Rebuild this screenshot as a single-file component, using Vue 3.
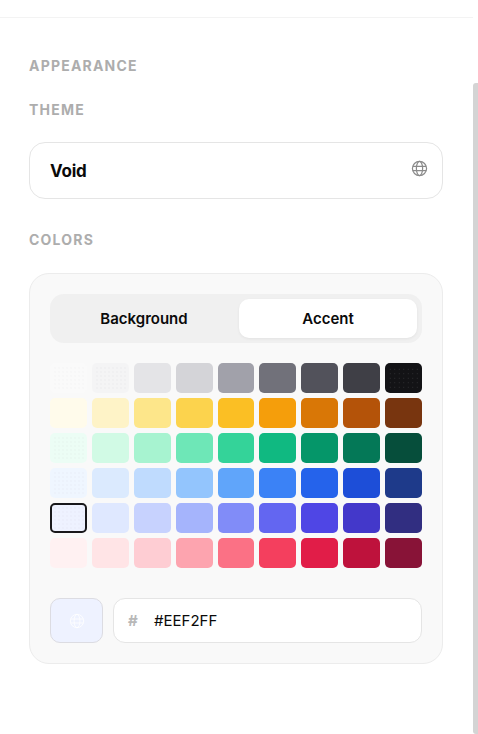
<script setup>
const palette = [
  ['#fafafa', '#f4f4f5', '#e4e4e7', '#d4d4d8', '#a1a1aa', '#71717a', '#52525b', '#3f3f46', '#131316'],
  ['#fffbeb', '#fef3c7', '#fde68a', '#fcd34d', '#fbbf24', '#f59e0b', '#d97706', '#b45309', '#78350f'],
  ['#ecfdf5', '#d1fae5', '#a7f3d0', '#6ee7b7', '#34d399', '#10b981', '#059669', '#047857', '#064e3b'],
  ['#eff6ff', '#dbeafe', '#bfdbfe', '#93c5fd', '#60a5fa', '#3b82f6', '#2563eb', '#1d4ed8', '#1e3a8a'],
  ['#eef2ff', '#dfe8ff', '#c7d2fe', '#a5b4fc', '#818cf8', '#6366f1', '#4f46e5', '#4338ca', '#312e81'],
  ['#fff1f2', '#ffe4e6', '#fecdd3', '#fda4af', '#fb7185', '#f43f5e', '#e11d48', '#be123c', '#881337'],
]
const swatches = palette.flat()
const selected = '#eef2ff'
const dotted = ['#f4f4f5', '#ecfdf5', '#eff6ff', '#eef2ff']
</script>

<template>
  <div class="page">
    <main class="panel">
      <div class="topbar"></div>
      <section class="content">
        <h2 class="label first">APPEARANCE</h2>
        <h3 class="label theme-label">THEME</h3>
        <div class="select">
          <span class="select-name">Void</span>
          <svg class="globe" viewBox="0 0 24 24" fill="none" stroke="currentColor" stroke-width="1.7">
            <circle cx="12" cy="12" r="10" />
            <ellipse cx="12" cy="12" rx="4.4" ry="10" />
            <path d="M2.5 9h19M2.5 15h19" />
          </svg>
        </div>
        <h3 class="label colors-label">COLORS</h3>
        <div class="card">
          <div class="tabs">
            <button class="tab">Background</button>
            <button class="tab active">Accent</button>
          </div>
          <div class="grid">
            <div
              v-for="color in swatches"
              :key="color"
              class="swatch"
              :class="{
                selected: color === selected,
                dotted: dotted.includes(color),
                'dotted-white': color === '#fafafa',
                'dotted-dark': color === '#131316',
              }"
              :style="{ backgroundColor: color }"
            ></div>
          </div>
          <div class="value-row">
            <div class="preview">
              <svg class="preview-globe" viewBox="0 0 24 24" fill="none" stroke="currentColor" stroke-width="1.2">
                <circle cx="12" cy="12" r="10" />
                <ellipse cx="12" cy="12" rx="4.4" ry="10" />
                <path d="M2.5 9h19M2.5 15h19" />
              </svg>
            </div>
            <div class="hex">
              <span class="hash">#</span>
              <span class="hex-value">#EEF2FF</span>
            </div>
          </div>
        </div>
      </section>
    </main>
    <div class="track"><div class="thumb"></div></div>
  </div>
</template>

<style>
html, body {
  margin: 0;
  background: #fff;
}
</style>

<style scoped>
.page {
  display: flex;
  width: 478px;
  height: 734px;
  overflow: hidden;
  background: #fff;
  font-family: Inter, "Liberation Sans", sans-serif;
}
.panel {
  width: 473px;
  flex: none;
}
.topbar {
  height: 17px;
  border-bottom: 1px solid #f3f3f3;
}
.content {
  padding: 40px 30px 0 29px;
}
.label {
  margin: 0;
  font-size: 14px;
  line-height: 16px;
  font-weight: 700;
  letter-spacing: 1.2px;
  color: #adadad;
}
.theme-label {
  margin-top: 28px;
}
.select {
  display: flex;
  align-items: center;
  justify-content: space-between;
  box-sizing: border-box;
  height: 57px;
  margin-top: 24px;
  padding: 0 14px 2px 20px;
  border: 1px solid #e5e5e5;
  border-radius: 16px;
  background: #fff;
}
.select-name {
  font-size: 17px;
  font-weight: 700;
  letter-spacing: -0.2px;
  color: #0a0a0a;
  padding-top: 2px;
}
.globe {
  width: 17px;
  height: 17px;
  margin-bottom: 3px;
  color: #8a8a8a;
}
.colors-label {
  margin-top: 33px;
}
.card {
  box-sizing: border-box;
  height: 391px;
  margin-top: 25px;
  padding: 20px;
  border: 1px solid #ececec;
  border-radius: 20px;
  background: #f9f9f9;
}
.tabs {
  display: grid;
  grid-template-columns: 1fr 1fr;
  gap: 6px;
  box-sizing: border-box;
  height: 49px;
  padding: 5px;
  border-radius: 14px;
  background: #f0f0f0;
}
.tab {
  padding: 0;
  border: 0;
  border-radius: 10px;
  background: transparent;
  font: 600 15px Inter, "Liberation Sans", sans-serif;
  color: #0a0a0a;
}
.tab.active {
  background: #fff;
  box-shadow: 0 1px 3px rgba(0, 0, 0, 0.06);
}
.grid {
  display: grid;
  grid-template-columns: repeat(9, 1fr);
  grid-auto-rows: 30px;
  gap: 5px;
  margin-top: 20px;
}
.swatch {
  position: relative;
  box-sizing: border-box;
  border-radius: 5px;
}
.swatch.dotted::after,
.swatch.dotted-white::after,
.swatch.dotted-dark::after {
  content: "";
  position: absolute;
  inset: 3px;
  background-size: 4px 4px;
}
.swatch.dotted::after {
  background-image: radial-gradient(rgba(120, 120, 140, 0.07) 0.6px, transparent 0.8px);
}
.swatch.dotted-white::after {
  background-image: radial-gradient(rgba(120, 120, 140, 0.04) 0.6px, transparent 0.8px);
}
.swatch.dotted-dark::after {
  inset: 4px 3px;
  background-image: radial-gradient(rgba(255, 255, 255, 0.14) 0.5px, transparent 0.7px);
  background-size: 4.5px 4.5px;
}
.swatch.selected {
  border: 2px solid #18181b;
}
.swatch.selected::after {
  inset: 1px;
}
.value-row {
  display: flex;
  gap: 10px;
  margin-top: 30px;
}
.preview {
  display: flex;
  align-items: center;
  justify-content: center;
  box-sizing: border-box;
  width: 53px;
  height: 45px;
  border: 1px solid #dcdce2;
  border-radius: 10px;
  background-color: #eef2ff;
}
.preview-globe {
  width: 16px;
  height: 16px;
  color: #fff;
}
.hex {
  flex: 1;
  display: flex;
  align-items: center;
  box-sizing: border-box;
  height: 45px;
  padding-left: 14px;
  border: 1px solid #e5e5e5;
  border-radius: 12px;
  background: #fff;
}
.hash {
  width: 26px;
  font-size: 15px;
  font-weight: 700;
  color: #b8b8b8;
}
.hex-value {
  font-size: 15px;
  color: #0a0a0a;
}
.track {
  width: 5px;
  flex: none;
}
.thumb {
  height: 651px;
  margin-top: 83px;
  border-radius: 3px 0 0 3px;
  background: #d4d4d4;
}
</style>
